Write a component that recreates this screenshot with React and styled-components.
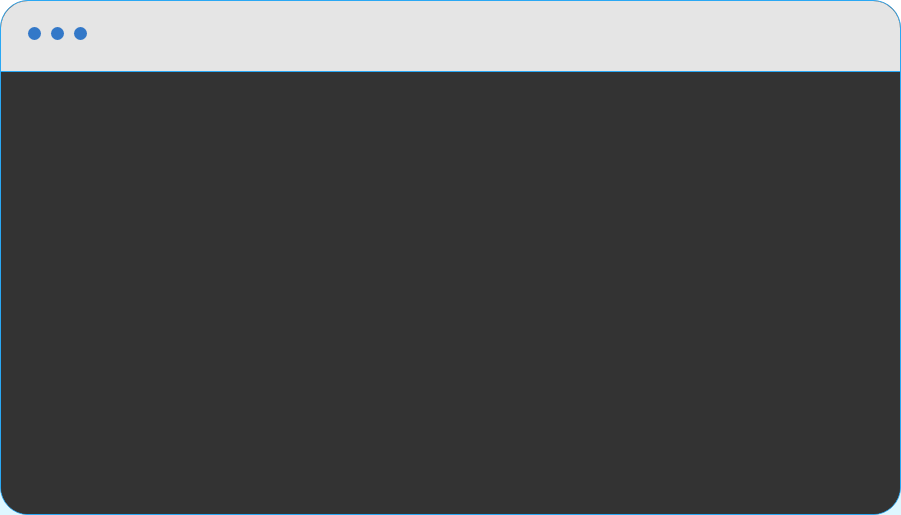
import styled, { createGlobalStyle } from "styled-components";

const GlobalStyle = createGlobalStyle`
  html, body {
    margin: 0;
    padding: 0;
    height: 100%;
  }
  body {
    background: linear-gradient(#ffffff 50%, #def7ff 50%);
    font-family: "Liberation Sans", Arial, sans-serif;
  }
  #root {
    height: 100%;
  }
`;

const Window = styled.div`
  box-sizing: border-box;
  width: 901px;
  height: 515px;
  border: 1px solid #2aa8f4;
  border-radius: 28px;
  overflow: hidden;
  display: flex;
  flex-direction: column;
  background: #333333;
`;

const TitleBar = styled.div`
  box-sizing: border-box;
  height: 71px;
  flex: none;
  background: #e5e5e5;
  border-bottom: 1px solid #2aa8f4;
  display: flex;
  align-items: center;
  gap: 10px;
  padding: 0 0 6px 27px;
`;

const Dot = styled.span`
  width: 13px;
  height: 13px;
  border-radius: 50%;
  background: #3378c8;
`;

const Body = styled.div`
  flex: 1;
  background: #333333;
`;

export default function App() {
  return (
    <>
      <GlobalStyle />
      <Window>
        <TitleBar>
          <Dot />
          <Dot />
          <Dot />
        </TitleBar>
        <Body />
      </Window>
    </>
  );
}
